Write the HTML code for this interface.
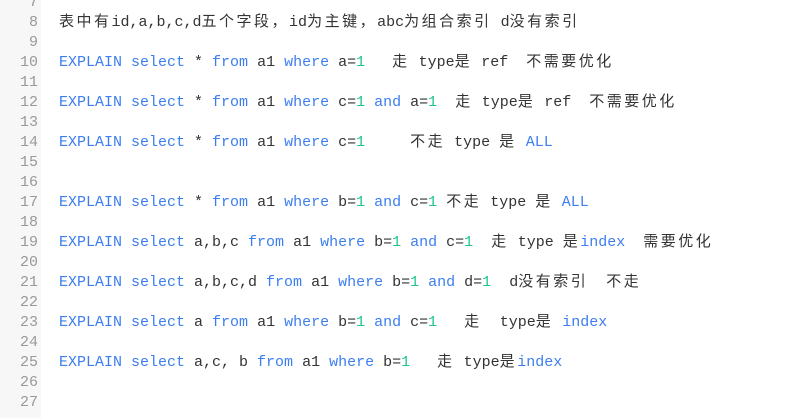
<html><head><style>
body{margin:0;width:786px;height:418px;overflow:hidden;background:#fff;font-family:"Liberation Mono","Noto Sans CJK SC",monospace;font-size:15px;color:#333}
.g{position:absolute;left:0;top:0;width:41px;height:418px;background:#f7f7f7}
.c{position:absolute;top:-7px;left:0;}
.l{height:20px;line-height:20px;white-space:pre;position:relative}
.n{position:absolute;left:0;width:38px;text-align:right;color:#999}
.t{position:absolute;left:59px}
.k{color:#3c7ef0}.d{color:#1cc48c}
.z{letter-spacing:2.5px}
</style></head><body><div class="g"></div><div class="c">
<div class="l"><span class="n">7</span></div>
<div class="l"><span class="n">8</span><span class="t"><span class="z">表中有</span>id,a,b,c,d<span class="z">五个字段，</span>id<span class="z">为主键，</span>abc<span class="z">为组合索引</span> d<span class="z">没有索引</span></span></div>
<div class="l"><span class="n">9</span></div>
<div class="l"><span class="n">10</span><span class="t"><span class="k">EXPLAIN select</span> * <span class="k">from</span> a1 <span class="k">where</span> a=<span class="d">1</span>   <span class="z">走</span> type<span class="z">是</span> ref  <span class="z">不需要优化</span></span></div>
<div class="l"><span class="n">11</span></div>
<div class="l"><span class="n">12</span><span class="t"><span class="k">EXPLAIN select</span> * <span class="k">from</span> a1 <span class="k">where</span> c=<span class="d">1</span> <span class="k">and</span> a=<span class="d">1</span>  <span class="z">走</span> type<span class="z">是</span> ref  <span class="z">不需要优化</span></span></div>
<div class="l"><span class="n">13</span></div>
<div class="l"><span class="n">14</span><span class="t"><span class="k">EXPLAIN select</span> * <span class="k">from</span> a1 <span class="k">where</span> c=<span class="d">1</span>     <span class="z">不走</span> type <span class="z">是</span> <span class="k">ALL</span></span></div>
<div class="l"><span class="n">15</span></div>
<div class="l"><span class="n">16</span></div>
<div class="l"><span class="n">17</span><span class="t"><span class="k">EXPLAIN select</span> * <span class="k">from</span> a1 <span class="k">where</span> b=<span class="d">1</span> <span class="k">and</span> c=<span class="d">1</span> <span class="z">不走</span> type <span class="z">是</span> <span class="k">ALL</span></span></div>
<div class="l"><span class="n">18</span></div>
<div class="l"><span class="n">19</span><span class="t"><span class="k">EXPLAIN select</span> a,b,c <span class="k">from</span> a1 <span class="k">where</span> b=<span class="d">1</span> <span class="k">and</span> c=<span class="d">1</span>  <span class="z">走</span> type <span class="z">是</span><span class="k">index</span>  <span class="z">需要优化</span></span></div>
<div class="l"><span class="n">20</span></div>
<div class="l"><span class="n">21</span><span class="t"><span class="k">EXPLAIN select</span> a,b,c,d <span class="k">from</span> a1 <span class="k">where</span> b=<span class="d">1</span> <span class="k">and</span> d=<span class="d">1</span>  d<span class="z">没有索引</span>  <span class="z">不走</span></span></div>
<div class="l"><span class="n">22</span></div>
<div class="l"><span class="n">23</span><span class="t"><span class="k">EXPLAIN select</span> a <span class="k">from</span> a1 <span class="k">where</span> b=<span class="d">1</span> <span class="k">and</span> c=<span class="d">1</span>   <span class="z">走</span>  type<span class="z">是</span> <span class="k">index</span></span></div>
<div class="l"><span class="n">24</span></div>
<div class="l"><span class="n">25</span><span class="t"><span class="k">EXPLAIN select</span> a,c, b <span class="k">from</span> a1 <span class="k">where</span> b=<span class="d">1</span>   <span class="z">走</span> type<span class="z">是</span><span class="k">index</span></span></div>
<div class="l"><span class="n">26</span></div>
<div class="l"><span class="n">27</span></div>
</div></body></html>
